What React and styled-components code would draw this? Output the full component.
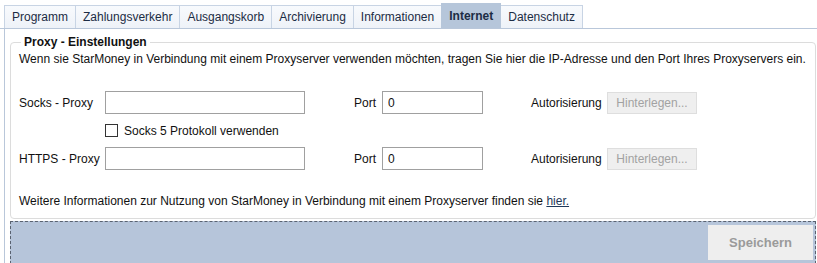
import React from 'react';
import styled, {createGlobalStyle} from 'styled-components';

const GlobalStyle = createGlobalStyle`
  html, body {
    margin: 0;
    padding: 0;
    background: #ffffff;
  }
  body {
    font-family: "Liberation Sans", Arial, sans-serif;
    font-size: 12px;
    color: #111111;
  }
`;

const Page = styled.div`
  width: 817px;
  height: 263px;
  padding-top: 3px;
  box-sizing: border-box;
  overflow: hidden;
`;

const TabBar = styled.div`
  display: flex;
  align-items: flex-end;
  padding-left: 4px;
  height: 25px;
  border-bottom: 1px solid #b9c7da;
`;

const Tab = styled.div`
  height: ${p => (p.active ? '25px' : '23px')};
  box-sizing: border-box;
  display: flex;
  align-items: center;
  padding: 0 7px;
  margin-right: -1px;
  border: 1px solid ${p => (p.active ? '#b6c6da' : '#c8d4e4')};
  border-bottom: none;
  background: ${p => (p.active ? '#b6c6da' : 'linear-gradient(#f8fafd, #eef2f8)')};
  color: #1c2c44;
  font-weight: ${p => (p.active ? 'bold' : 'normal')};
  font-size: 12px;
  position: relative;
  z-index: ${p => (p.active ? 1 : 0)};
`;

const Pane = styled.div`
  margin-left: 4px;
  border-left: 1px solid #b9c7da;
  padding: 6px 1px 0 5px;
  height: 234px;
  box-sizing: border-box;
`;

const Group = styled.fieldset`
  margin: 0;
  padding: 1px 8px 10px 8px;
  border: 1px solid #dcdcdc;
  border-radius: 4px;
  height: 184px;
  box-sizing: border-box;
`;

const Legend = styled.legend`
  font-weight: bold;
  font-size: 12px;
  padding: 0 3px;
  margin-left: 2px;
  line-height: 14px;
  color: #111111;
`;

const Text = styled.div`
  line-height: 14px;
  margin-top: ${p => p.top || 0}px;
  white-space: nowrap;
`;

const Row = styled.div`
  display: flex;
  align-items: center;
  height: ${p => p.height || 23}px;
  margin-top: ${p => p.top || 0}px;
`;

const Label = styled.span`
  width: ${p => p.width}px;
  margin-left: ${p => p.gap || 0}px;
  flex: none;
  white-space: nowrap;
`;

const Input = styled.input`
  width: ${p => p.width}px;
  height: 23px;
  box-sizing: border-box;
  border: 1px solid #a0a0a0;
  padding: 0 5px;
  font-family: inherit;
  font-size: 12px;
  color: #111111;
  outline: none;
  flex: none;
`;

const GhostButton = styled.button`
  width: 90px;
  height: 22px;
  box-sizing: border-box;
  border: 1px solid #dedede;
  background: #efefef;
  color: #a2a2a2;
  font-family: inherit;
  font-size: 12px;
  padding: 0;
  flex: none;
`;

const Check = styled.span`
  width: 13px;
  height: 13px;
  box-sizing: border-box;
  border: 1px solid #333333;
  background: #ffffff;
  margin-left: 86px;
  margin-right: 6px;
  flex: none;
`;

const Link = styled.a`
  color: #1f3859;
  text-decoration: underline;
`;

const Footer = styled.div`
  margin-top: 2px;
  height: 43px;
  box-sizing: border-box;
  border: 1px dashed #5a6270;
  background: #b6c5da;
  display: flex;
  justify-content: flex-end;
  align-items: center;
  padding-right: 2px;
`;

const SaveButton = styled.button`
  width: 105px;
  height: 35px;
  border: none;
  background: #eeeeee;
  color: #9a9a9a;
  font-family: inherit;
  font-weight: bold;
  font-size: 13px;
  padding: 0;
`;

const tabs = [
  'Programm',
  'Zahlungsverkehr',
  'Ausgangskorb',
  'Archivierung',
  'Informationen',
  'Internet',
  'Datenschutz'
];

const ProxyRow = ({label, top}) => (
  <Row top={top}>
    <Label width={86}>{label}</Label>
    <Input width={200} defaultValue='' />
    <Label width={28} gap={49}>Port</Label>
    <Input width={101} defaultValue='0' />
    <Label width={76} gap={48}>Autorisierung</Label>
    <GhostButton disabled>Hinterlegen...</GhostButton>
  </Row>
);

export default function App() {
  return (
    <Page>
      <GlobalStyle />
      <TabBar>
        {tabs.map(name => (
          <Tab key={name} active={name === 'Internet'}>{name}</Tab>
        ))}
      </TabBar>
      <Pane>
        <Group>
          <Legend>Proxy - Einstellungen</Legend>
          <Text top={2}>
            Wenn sie StarMoney in Verbindung mit einem Proxyserver verwenden möchten, tragen Sie hier die IP-Adresse und den Port Ihres Proxyservers ein.
          </Text>
          <ProxyRow label='Socks - Proxy' top={25} />
          <Row height={13} top={10}>
            <Check />
            <span>Socks 5 Protokoll verwenden</span>
          </Row>
          <ProxyRow label='HTTPS - Proxy' top={10} />
          <Text top={24}>
            Weitere Informationen zur Nutzung von StarMoney in Verbindung mit einem Proxyserver finden sie <Link href='#'>hier.</Link>
          </Text>
        </Group>
        <Footer>
          <SaveButton disabled>Speichern</SaveButton>
        </Footer>
      </Pane>
    </Page>
  );
}
